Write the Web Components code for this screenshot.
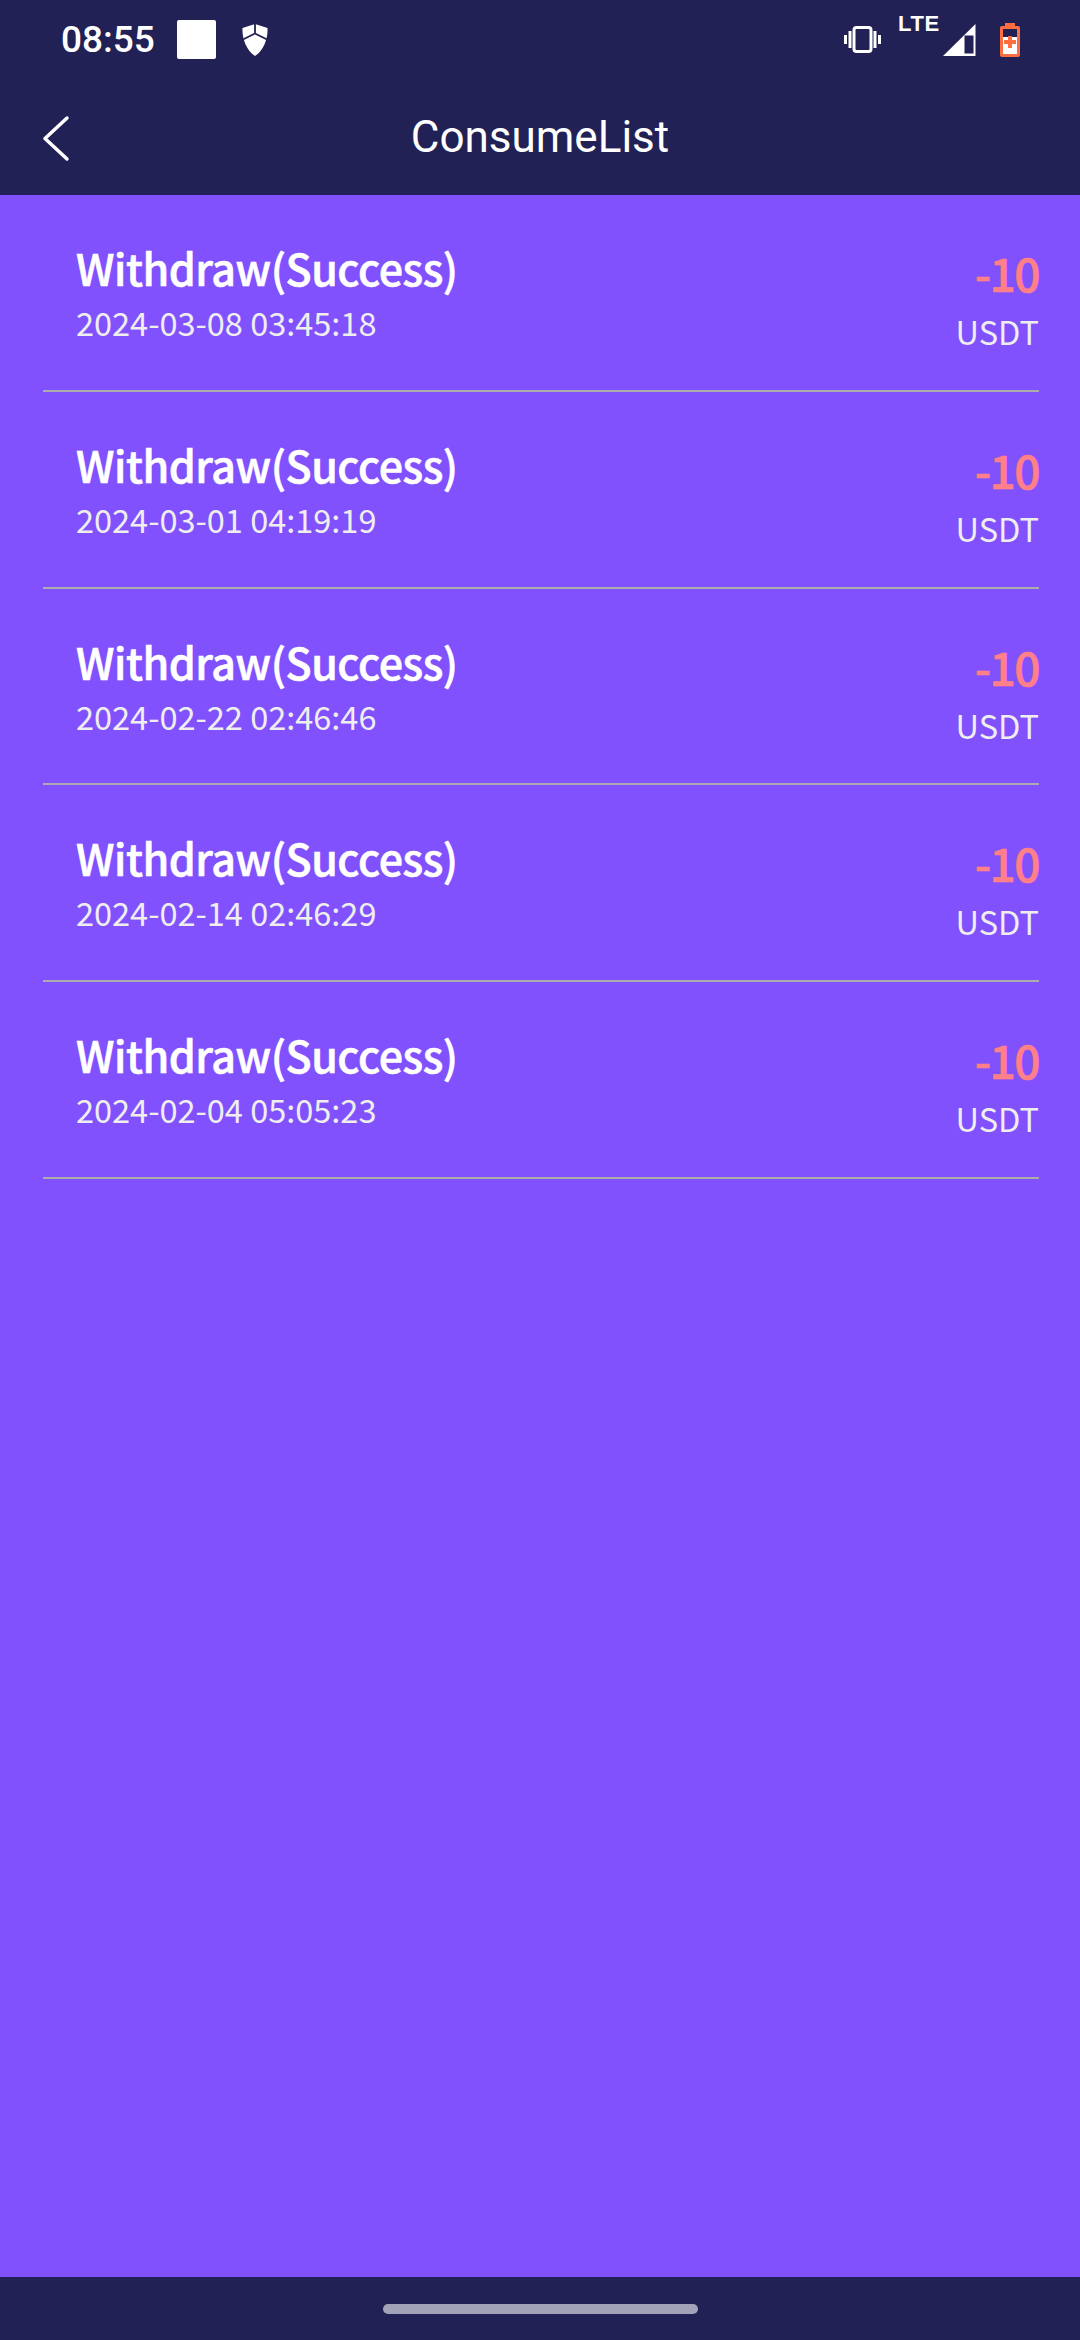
<!DOCTYPE html>
<html lang="en"><head><meta charset="utf-8"><title>ConsumeList</title>
<style>
html,body{margin:0;padding:0;background:#8251fe}
body{width:1080px;height:2340px;overflow:hidden}
app-screen{height:2340px}
</style></head><body>
<app-screen>
<status-bar slot="top"></status-bar>
<app-header slot="top" title="ConsumeList"></app-header>
<consume-list>
<consume-row date="2024-03-08 03:45:18"></consume-row>
<consume-row date="2024-03-01 04:19:19"></consume-row>
<consume-row date="2024-02-22 02:46:46"></consume-row>
<consume-row date="2024-02-14 02:46:29"></consume-row>
<consume-row date="2024-02-04 05:05:23"></consume-row>
</consume-list>
<nav-bar slot="bottom"></nav-bar>
</app-screen>
<script>
function def(name, html, init){
  customElements.define(name, class extends HTMLElement{
    connectedCallback(){
      if(this.shadowRoot) return;
      const r=this.attachShadow({mode:'open'});
      r.innerHTML=html;
      if(init) init(r,this);
    }
  });
}
def('app-screen',`<style>:host{display:flex;flex-direction:column;width:1080px;background:#8251fe}
main{flex:1;min-height:0}</style><slot name="top"></slot><main><slot></slot></main><slot name="bottom"></slot>`);

def('status-bar',`<style>:host{display:flex;align-items:center;height:78px;background:#212155;color:#fff;font:500 37px Roboto,sans-serif;padding:0 60px 0 61px;box-sizing:border-box}
.time{width:116px;line-height:78px;margin-top:2px}
.sq{width:39px;height:39px;background:#fff;border-radius:2px;margin-right:26px}
svg{display:block;flex:none}
.shield{margin-top:1px}
.right{margin-left:auto;display:flex;align-items:center;height:78px}
.lte{font:700 22px/1 "Liberation Sans",sans-serif;letter-spacing:.6px;margin:-30px 6px 0 17px;width:39px}
.sig{margin:1px 24px 0 0}
.bat{margin-top:2px}
</style>
<span class="time">08:55</span><div class="sq"></div>
<svg class="shield" width="26" height="32" viewBox="0 0 26 32"><path d="M13 0 25.500 4C26 14 22 26 13 32 4 26 0 14 .5 4Z" fill="#fff"/><path d="M13 0V9.500M0 16 13 9.500 26 16" fill="none" stroke="#212155" stroke-width="1.800"/></svg>
<div class="right">
<svg width="37" height="27" viewBox="0 0 37 27" fill="none" stroke="#fff"><rect x="10" y="1.500" width="17" height="24" rx="2.500" stroke-width="3"/><path d="M1.500 9v9M6 5v17M31 5v17M35.500 9v9" stroke-width="3"/></svg>
<span class="lte">LTE</span>
<svg class="sig" width="33" height="32" viewBox="0 0 33 32"><path d="M0 32 32.500 0V32Z" fill="#fff"/><path d="M21.500 11.500H30.500V29.500H21.500Z" fill="#212155"/></svg>
<svg class="bat" width="20" height="34" viewBox="0 0 20 34"><path d="M5 0h10v3h3a2 2 0 0 1 2 2v27a2 2 0 0 1-2 2H2a2 2 0 0 1-2-2V5a2 2 0 0 1 2-2h3Z" fill="#ff6e40"/><rect x="3" y="6" width="14" height="25" fill="#212155"/><rect x="3" y="14" width="14" height="17" fill="#fff"/><path d="M8 13h4v4h4v4h-4v4H8v-4H4v-4h4Z" fill="#ff6e40"/></svg>
</div>`);

def('app-header',`<style>:host{display:flex;align-items:center;justify-content:center;height:117px;background:#212155;color:#fff;position:relative}
h1{margin:0;font:400 44px Roboto,sans-serif;line-height:1}
svg{position:absolute;left:42px;top:37px}</style>
<svg width="28" height="48" viewBox="0 0 28 48" fill="none" stroke="#fff" stroke-width="3.500" stroke-linecap="round" stroke-linejoin="round"><path d="M25 3 3 23.500 25 44"/></svg>
<h1></h1>`,(r,h)=>{r.querySelector('h1').textContent=h.getAttribute('title')});

def('consume-list',`<style>:host{display:flex;flex-direction:column;padding:0 41px 0 43px}</style><slot></slot>`);

def('consume-row',`<style>:host{display:flex;justify-content:space-between;box-sizing:border-box;height:196.800px;border-bottom:2px solid #acacac;font-family:"Noto Sans CJK SC","Noto Sans",sans-serif}
.l{padding:44px 0 0 33px}
.t{font-size:43px;font-weight:500;line-height:56px;color:#fff;letter-spacing:-.47px;-webkit-text-stroke:.6px #fff}
.d{font-size:32.500px;line-height:40px;color:#eee;margin-top:7px}
.r{text-align:right;padding-top:49px}
.a{font-size:46px;font-weight:500;line-height:56px;color:#ff8088;letter-spacing:-1.500px;-webkit-text-stroke:.6px #ff8088}
.u{font-size:32.500px;line-height:40px;color:#eee;margin-top:11px}</style>
<div class="l"><div class="t">Withdraw(Success)</div><div class="d"></div></div>
<div class="r"><div class="a">-10</div><div class="u">USDT</div></div>`,(r,h)=>{r.querySelector('.d').textContent=h.getAttribute('date')});

def('nav-bar',`<style>:host{display:flex;align-items:center;justify-content:center;height:63px;background:#212155}
i{display:block;width:315px;height:10px;border-radius:5px;background:#a2a2b9;margin-top:1px}</style><i></i>`);
</script>
</body></html>
